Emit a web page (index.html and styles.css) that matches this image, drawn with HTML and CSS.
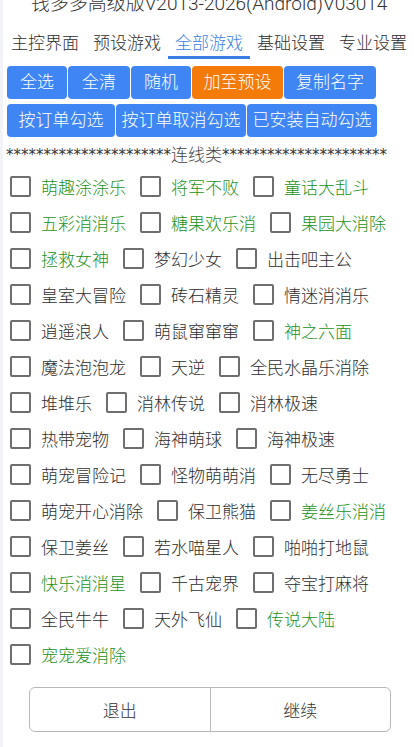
FILE: index.html
```html
<!DOCTYPE html>
<html lang="zh-CN">
<head>
<meta charset="utf-8">
<title>钱多多高级版</title>
<link rel="stylesheet" href="styles.css">
</head>
<body>
<div class="page">
  <div class="title">钱多多高级版V2013-2026(Android)V03014</div>
  <nav class="tabs">
    <span class="tab">主控界面</span>
    <span class="tab">预设游戏</span>
    <span class="tab active">全部游戏</span>
    <span class="tab">基础设置</span>
    <span class="tab">专业设置</span>
  </nav>
  <div class="btn-row first">
    <span class="btn w60">全选</span>
    <span class="btn w62">全清</span>
    <span class="btn w60">随机</span>
    <span class="btn w91 orange">加至预设</span>
    <span class="btn w92">复制名字</span>
  </div>
  <div class="btn-row">
    <span class="btn w108">按订单勾选</span>
    <span class="btn w130">按订单取消勾选</span>
    <span class="btn w130">已安装自动勾选</span>
  </div>
  <div class="sep"><span class="stars">**********************</span><span class="sep-text">连线类</span><span class="stars">**********************</span></div>
  <div class="list">
    <div class="row"><label class="item green"><span class="cb"></span>萌趣涂涂乐</label><label class="item green"><span class="cb"></span>将军不败</label><label class="item green"><span class="cb"></span>童话大乱斗</label></div>
    <div class="row"><label class="item green"><span class="cb"></span>五彩消消乐</label><label class="item green"><span class="cb"></span>糖果欢乐消</label><label class="item green"><span class="cb"></span>果园大消除</label></div>
    <div class="row"><label class="item green"><span class="cb"></span>拯救女神</label><label class="item"><span class="cb"></span>梦幻少女</label><label class="item"><span class="cb"></span>出击吧主公</label></div>
    <div class="row"><label class="item"><span class="cb"></span>皇室大冒险</label><label class="item"><span class="cb"></span>砖石精灵</label><label class="item"><span class="cb"></span>情迷消消乐</label></div>
    <div class="row"><label class="item"><span class="cb"></span>逍遥浪人</label><label class="item"><span class="cb"></span>萌鼠窜窜窜</label><label class="item green"><span class="cb"></span>神之六面</label></div>
    <div class="row"><label class="item"><span class="cb"></span>魔法泡泡龙</label><label class="item"><span class="cb"></span>天逆</label><label class="item"><span class="cb"></span>全民水晶乐消除</label></div>
    <div class="row"><label class="item"><span class="cb"></span>堆堆乐</label><label class="item"><span class="cb"></span>消林传说</label><label class="item"><span class="cb"></span>消林极速</label></div>
    <div class="row"><label class="item"><span class="cb"></span>热带宠物</label><label class="item"><span class="cb"></span>海神萌球</label><label class="item"><span class="cb"></span>海神极速</label></div>
    <div class="row"><label class="item"><span class="cb"></span>萌宠冒险记</label><label class="item"><span class="cb"></span>怪物萌萌消</label><label class="item"><span class="cb"></span>无尽勇士</label></div>
    <div class="row"><label class="item"><span class="cb"></span>萌宠开心消除</label><label class="item"><span class="cb"></span>保卫熊猫</label><label class="item green"><span class="cb"></span>姜丝乐消消</label></div>
    <div class="row"><label class="item"><span class="cb"></span>保卫姜丝</label><label class="item"><span class="cb"></span>若水喵星人</label><label class="item"><span class="cb"></span>啪啪打地鼠</label></div>
    <div class="row"><label class="item green"><span class="cb"></span>快乐消消星</label><label class="item"><span class="cb"></span>千古宠界</label><label class="item"><span class="cb"></span>夺宝打麻将</label></div>
    <div class="row"><label class="item"><span class="cb"></span>全民牛牛</label><label class="item"><span class="cb"></span>天外飞仙</label><label class="item green"><span class="cb"></span>传说大陆</label></div>
    <div class="row"><label class="item green"><span class="cb"></span>宠宠爱消除</label></div>
  </div>
  <div class="footer">
    <span class="fbtn">退出</span>
    <span class="fbtn">继续</span>
  </div>
</div>
</body>
</html>
```

FILE: styles.css
```css
html, body {
  margin: 0;
  padding: 0;
  background: #ffffff;
}
body {
  width: 414px;
  height: 747px;
  overflow: hidden;
  font-family: Roboto, "Noto Sans CJK SC", sans-serif;
  font-weight: 300;
  color: #333333;
  box-shadow: inset 3px 0 0 #f1f3f7;
}
.page {
  display: flex;
  flex-direction: column;
}
.title {
  margin-top: -10px;
  height: 28px;
  line-height: 28px;
  font-size: 19px;
  text-align: center;
  padding-left: 4px;
  white-space: nowrap;
  color: #333333;
}
.tabs {
  display: flex;
  padding-left: 4px;
}
.tab {
  width: 82px;
  box-sizing: border-box;
  text-align: center;
  font-size: 17px;
  line-height: 22px;
  padding-top: 14px;
  padding-bottom: 2px;
  border-bottom: 3px solid transparent;
  color: #2e2e2e;
  white-space: nowrap;
}
.tab.active {
  color: #3b7ee3;
  border-bottom-color: #3b7ee3;
}
.btn-row {
  display: flex;
  gap: 1px;
  padding-left: 7px;
  margin-top: 5px;
}
.btn-row.first {
  margin-top: 7px;
}
.btn {
  height: 33px;
  line-height: 33px;
  border-radius: 4px;
  background: #3f86f4;
  color: #ffffff;
  font-size: 17px;
  text-align: center;
  white-space: nowrap;
}
.btn.orange {
  background: #f47b0a;
}
.w60 { width: 60px; }
.w62 { width: 62px; }
.w91 { width: 91px; }
.w92 { width: 92px; }
.w108 { width: 108px; }
.w130 { width: 130px; }
.sep {
  margin-top: 7px;
  height: 22px;
  line-height: 22px;
  padding-left: 6px;
  white-space: nowrap;
  display: flex;
  align-items: center;
}
.stars {
  font-family: "DejaVu Sans", sans-serif;
  font-weight: 400;
  font-size: 15px;
  color: #333333;
}
.sep-text {
  font-size: 17px;
  color: #444444;
}
.list {
  margin-top: 2px;
  display: flex;
  flex-direction: column;
}
.row {
  height: 36px;
  display: flex;
  align-items: center;
  gap: 14px;
  padding-left: 10px;
}
.item {
  display: flex;
  align-items: center;
  gap: 10px;
  font-size: 17px;
  color: #2e2e2e;
  white-space: nowrap;
}
.item.green {
  color: #1c921b;
}
.cb {
  width: 21px;
  height: 21px;
  box-sizing: border-box;
  border: 2px solid #6e6e6e;
  border-radius: 2px;
  background: #ffffff;
  flex: none;
}
.footer {
  margin: 15px 23px 0 29px;
  height: 45px;
  display: flex;
  border: 1.5px solid #b8b8b8;
  border-radius: 6px;
  box-sizing: border-box;
}
.fbtn {
  flex: 1;
  display: flex;
  align-items: center;
  justify-content: center;
  font-size: 17px;
  color: #333333;
}
.fbtn + .fbtn {
  border-left: 1px solid #b8b8b8;
}
```
